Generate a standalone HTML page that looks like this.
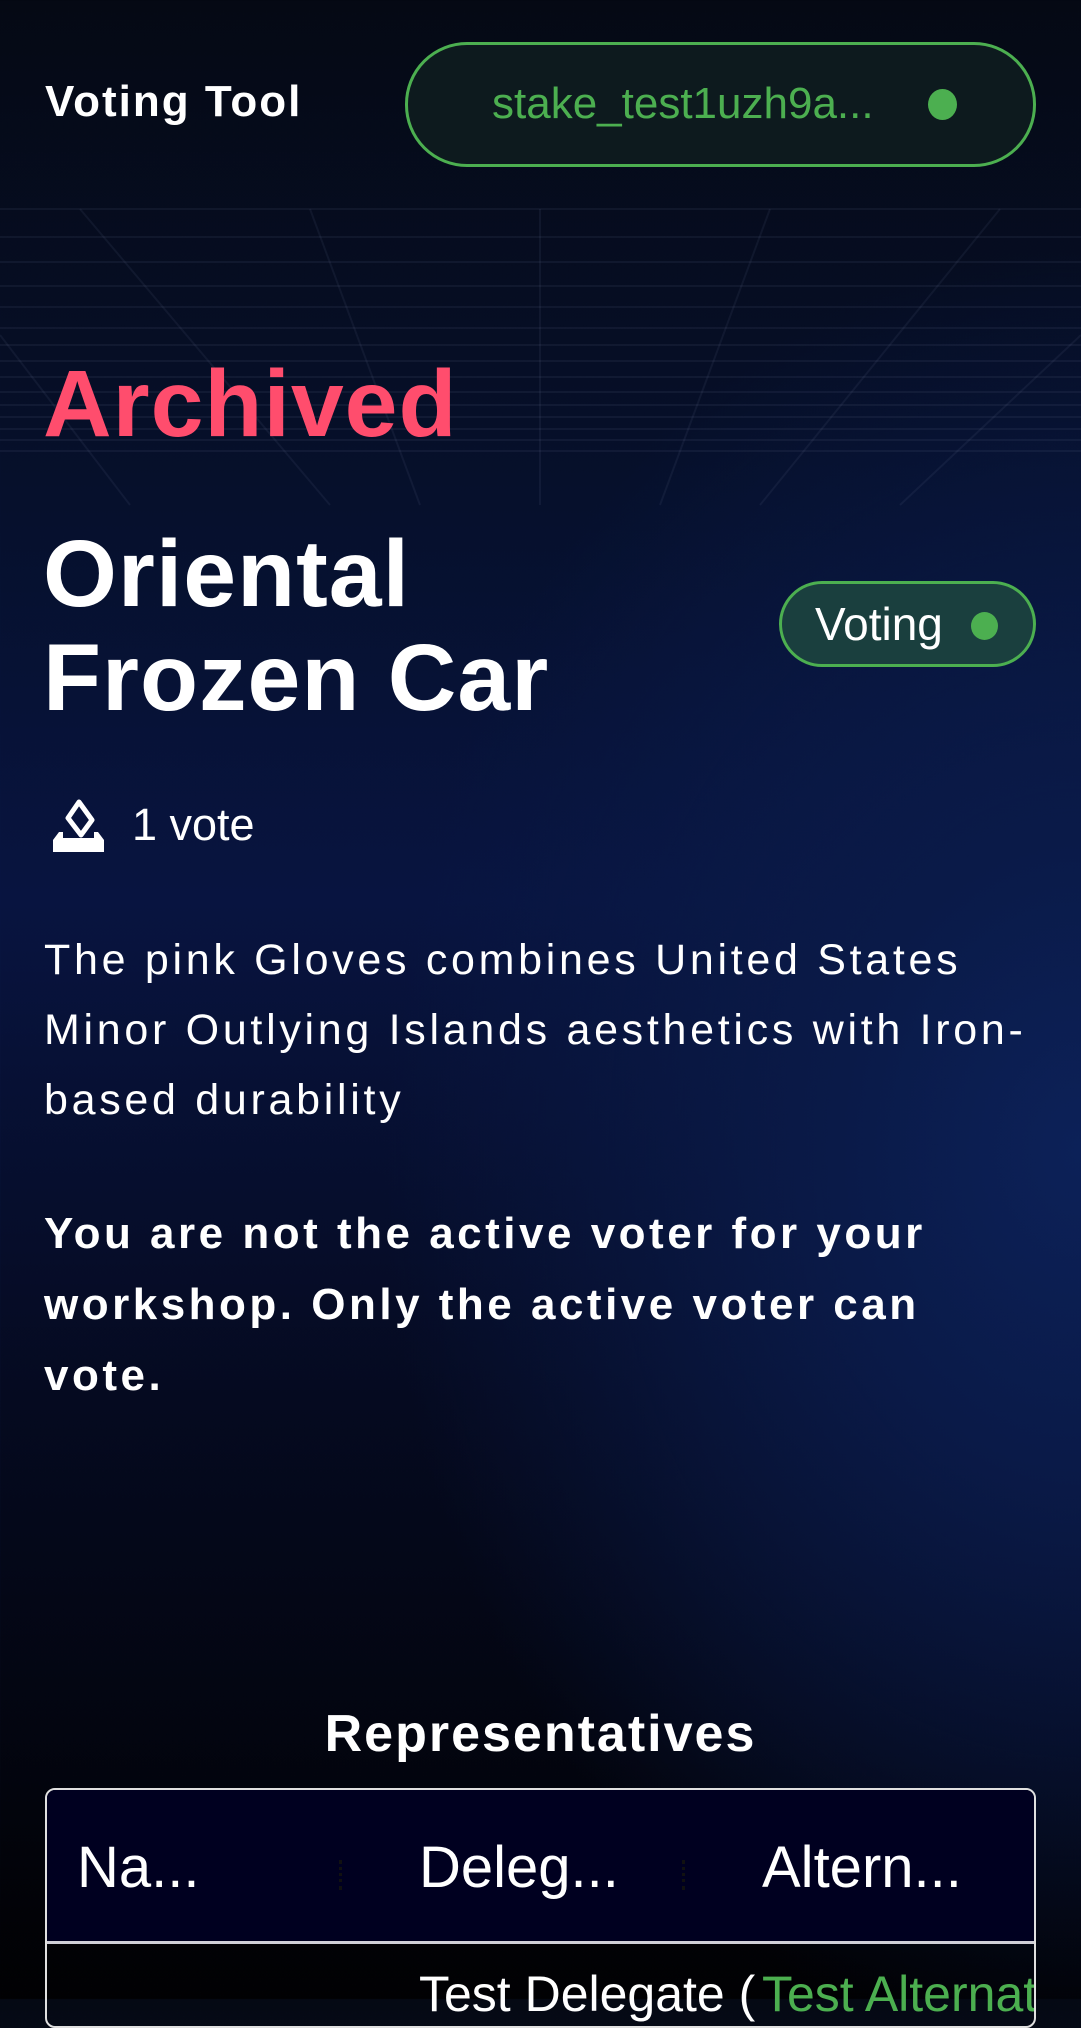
<!DOCTYPE html>
<html><head><meta charset="utf-8"><style>
*{margin:0;padding:0;box-sizing:border-box}
body{width:1081px;height:1999px;overflow:hidden;font-family:"Liberation Sans",sans-serif;color:#fff;position:relative;
background:radial-gradient(ellipse 700px 900px at 1081px 1150px,#0c2158 0%,#0a1a48 35%,rgba(6,14,40,0) 100%),linear-gradient(180deg,#050914 0%,#06102c 25%,#081440 45%,#050a20 70%,#010103 100%);}
.abs{position:absolute}
</style></head><body>
<svg class="abs" style="left:0;top:205px" width="1081" height="310" viewBox="0 0 1081 310">
<g stroke="#8090b0" stroke-opacity="0.09" stroke-width="2" fill="none">
<line x1="0" y1="4" x2="1081" y2="4"/><line x1="0" y1="32" x2="1081" y2="32"/><line x1="0" y1="57" x2="1081" y2="57"/><line x1="0" y1="81" x2="1081" y2="81"/><line x1="0" y1="102" x2="1081" y2="102"/><line x1="0" y1="123" x2="1081" y2="123"/><line x1="0" y1="140" x2="1081" y2="140"/><line x1="0" y1="156" x2="1081" y2="156"/><line x1="0" y1="172" x2="1081" y2="172"/><line x1="0" y1="187" x2="1081" y2="187"/><line x1="0" y1="200" x2="1081" y2="200"/><line x1="0" y1="212" x2="1081" y2="212"/><line x1="0" y1="224" x2="1081" y2="224"/><line x1="0" y1="235" x2="1081" y2="235"/><line x1="0" y1="246" x2="1081" y2="246"/>
<line x1="80" y1="4" x2="330" y2="300"/><line x1="310" y1="4" x2="420" y2="300"/><line x1="540" y1="4" x2="540" y2="300"/><line x1="770" y1="4" x2="660" y2="300"/><line x1="1000" y1="4" x2="760" y2="300"/><line x1="0" y1="130" x2="130" y2="300"/><line x1="1081" y1="130" x2="900" y2="300"/>
</g></svg>
<div class="abs" style="left:45px;top:77px;font-size:44px;font-weight:bold;letter-spacing:2px">Voting Tool</div>
<div class="abs" style="left:405px;top:42px;width:631px;height:125px;border:3px solid #4caf50;border-radius:62px;background:#0d1a1e"></div>
<div class="abs" style="left:492px;top:79px;font-size:44px;color:#4caf50">stake_test1uzh9a...</div>
<div class="abs" style="left:928px;top:89px;width:29px;height:31px;border-radius:50%;background:#4caf50"></div>
<div class="abs" style="left:43px;top:350px;font-size:95px;font-weight:bold;color:#ff4d6d;letter-spacing:1px">Archived</div>
<div class="abs" style="left:43px;top:522px;font-size:95px;font-weight:bold;line-height:104px;letter-spacing:1px">Oriental<br>Frozen Car</div>
<div class="abs" style="left:779px;top:581px;width:257px;height:86px;border:3px solid #4caf50;border-radius:43px;background:#1a3f3e"></div>
<div class="abs" style="left:815px;top:597px;font-size:46px">Voting</div>
<div class="abs" style="left:971px;top:612px;width:27px;height:28px;border-radius:50%;background:#4caf50"></div>
<svg class="abs" style="left:50px;top:798px" width="56" height="56" viewBox="0 0 56 56">
<path d="M29 4 L42 22 L31 37 L18 20 Z" fill="none" stroke="#fff" stroke-width="5" stroke-linejoin="round"/>
<path d="M9 34 L3 42 L3 54 L54 54 L54 42 L48 34 L44 34 L44 40 L13 40 L13 34 Z" fill="#fff"/>
</svg>
<div class="abs" style="left:132px;top:799px;font-size:45px">1 vote</div>
<div class="abs" style="left:44px;top:925px;white-space:nowrap;font-size:43px;line-height:70px;letter-spacing:3.7px">The pink Gloves combines United States<br>Minor Outlying Islands aesthetics with Iron-<br>based durability</div>
<div class="abs" style="left:44px;top:1198px;white-space:nowrap;font-size:44px;font-weight:bold;line-height:71px;letter-spacing:3.5px">You are not the active voter for your<br>workshop. Only the active voter can<br>vote.</div>
<div class="abs" style="left:0;width:1081px;top:1704px;text-align:center;font-size:52px;font-weight:bold;letter-spacing:2px">Representatives</div>
<div class="abs" style="left:45px;top:1788px;width:991px;height:240px;border:2px solid #e0e0e0;border-radius:10px;overflow:hidden">
<div style="height:154px;background:#000020;border-bottom:3px solid #d0d0d8;position:relative">
<span class="abs" style="left:30px;top:44px;font-size:58px">Na...</span>
<span class="abs" style="left:372px;top:44px;font-size:58px">Deleg...</span>
<span class="abs" style="left:715px;top:44px;font-size:58px">Altern...</span>
<span class="abs" style="left:292px;top:70px;width:3px;height:30px;border-left:3px dotted #111"></span>
<span class="abs" style="left:635px;top:70px;width:3px;height:30px;border-left:3px dotted #111"></span>
</div>
<div class="abs" style="left:372px;top:175px;width:340px;overflow:hidden;font-size:50px;white-space:nowrap">Test Delegate (Delegate)</div>
<div class="abs" style="left:715px;top:175px;width:280px;overflow:hidden;font-size:50px;color:#4caf50;white-space:nowrap">Test Alternate</div>
</div>
</body></html>
